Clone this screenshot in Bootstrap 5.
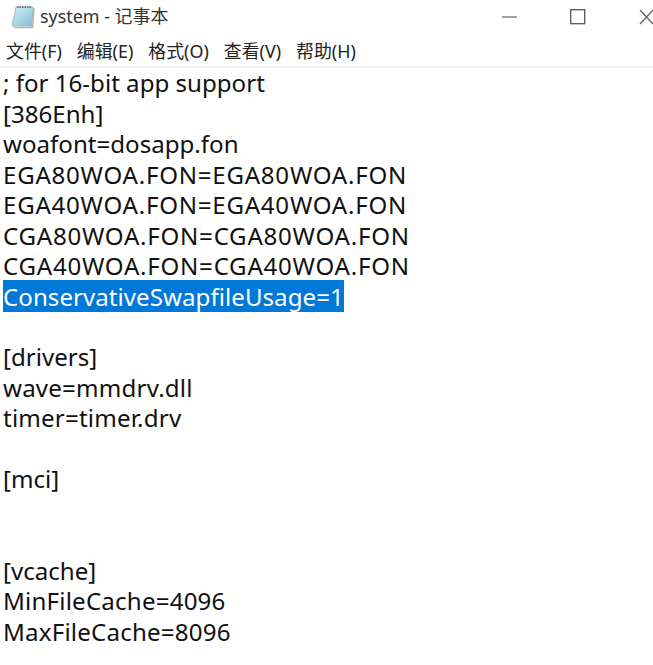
<!DOCTYPE html>
<html lang="zh">
<head>
<meta charset="utf-8">
<title>system - 记事本</title>
<link href="https://cdn.jsdelivr.net/npm/bootstrap@5.3.0/dist/css/bootstrap.min.css" rel="stylesheet">
<style>
html,body{height:665px;overflow:hidden;background:#fff;}
body{font-family:"Noto Sans","Noto Sans CJK SC",sans-serif;color:#111;}
.win-title{height:33px;padding-left:11px;gap:5px;}
.win-name{font-size:17.9px;line-height:33px;color:#333;}
.win-ctrls{margin-left:auto;margin-right:-27px;flex-shrink:0;}
.ctrl-slot{width:68px;height:33px;}
.win-menu{height:35px;border-bottom:2px solid #f0f0f0;padding:4px 0 0 6px;gap:15px;font-size:17.9px;color:#222;}
.note-body{padding:.4px 0 0 3px;font-size:24.1px;line-height:30.45px;white-space:pre;color:#111;}
.caps-line{letter-spacing:.74px;}
.wide-line{letter-spacing:.2px;}
.sel-line{display:inline-block;background:#0078d7;box-shadow:0 -2px 0 #0078d7;color:#fff;height:30px;vertical-align:top;letter-spacing:.04px;}
</style>
</head>
<body>
<div class="d-flex align-items-center win-title">
<svg width="24" height="27" viewBox="0 0 24 27"><defs><linearGradient id="padfill" x1="0" y1="0" x2="1" y2="1"><stop offset="0" stop-color="#d3eef6"/><stop offset="1" stop-color="#7fc0d6"/></linearGradient></defs><path d="M5 4h17l-1 19H1z" fill="url(#padfill)" stroke="#8fb4c0" stroke-width=".8"/><path d="M3 24.500h18.500L23 5" fill="none" stroke="#b9b49a" stroke-width="1.500"/><path d="M6 4h15" stroke="#777" stroke-width="2" stroke-dasharray="1.500 1"/></svg>
<span class="win-name">system - 记事本</span>
<div class="d-flex win-ctrls">
<div class="ctrl-slot d-flex align-items-center justify-content-center"><svg width="16" height="16"><path d="M0 8h15" stroke="#666" stroke-width="1.2"/></svg></div>
<div class="ctrl-slot d-flex align-items-center justify-content-center"><svg width="16" height="16"><rect x=".7" y=".7" width="14" height="14" fill="none" stroke="#555" stroke-width="1.3"/></svg></div>
<div class="ctrl-slot d-flex align-items-center justify-content-center"><svg width="14" height="16"><path d="M1 1l13 14M14 1L1 15" stroke="#666" stroke-width="1.3"/></svg></div>
</div>
</div>
<div class="d-flex align-items-center win-menu"><span>文件(F)</span><span>编辑(E)</span><span>格式(O)</span><span>查看(V)</span><span>帮助(H)</span></div>
<div class="note-body">; for 16-bit app support
[386Enh]
woafont=dosapp.fon
<span class="caps-line">EGA80WOA.FON=EGA80WOA.FON</span>
<span class="caps-line">EGA40WOA.FON=EGA40WOA.FON</span>
<span class="caps-line">CGA80WOA.FON=CGA80WOA.FON</span>
<span class="caps-line">CGA40WOA.FON=CGA40WOA.FON</span>
<span class="sel-line">ConservativeSwapfileUsage=1</span>

[drivers]
<span class="wide-line">wave=mmdrv.dll</span>
<span class="wide-line">timer=timer.drv</span>

[mci]


[vcache]
<span class="wide-line">MinFileCache=4096</span>
<span class="wide-line">MaxFileCache=8096</span></div>
</body>
</html>
